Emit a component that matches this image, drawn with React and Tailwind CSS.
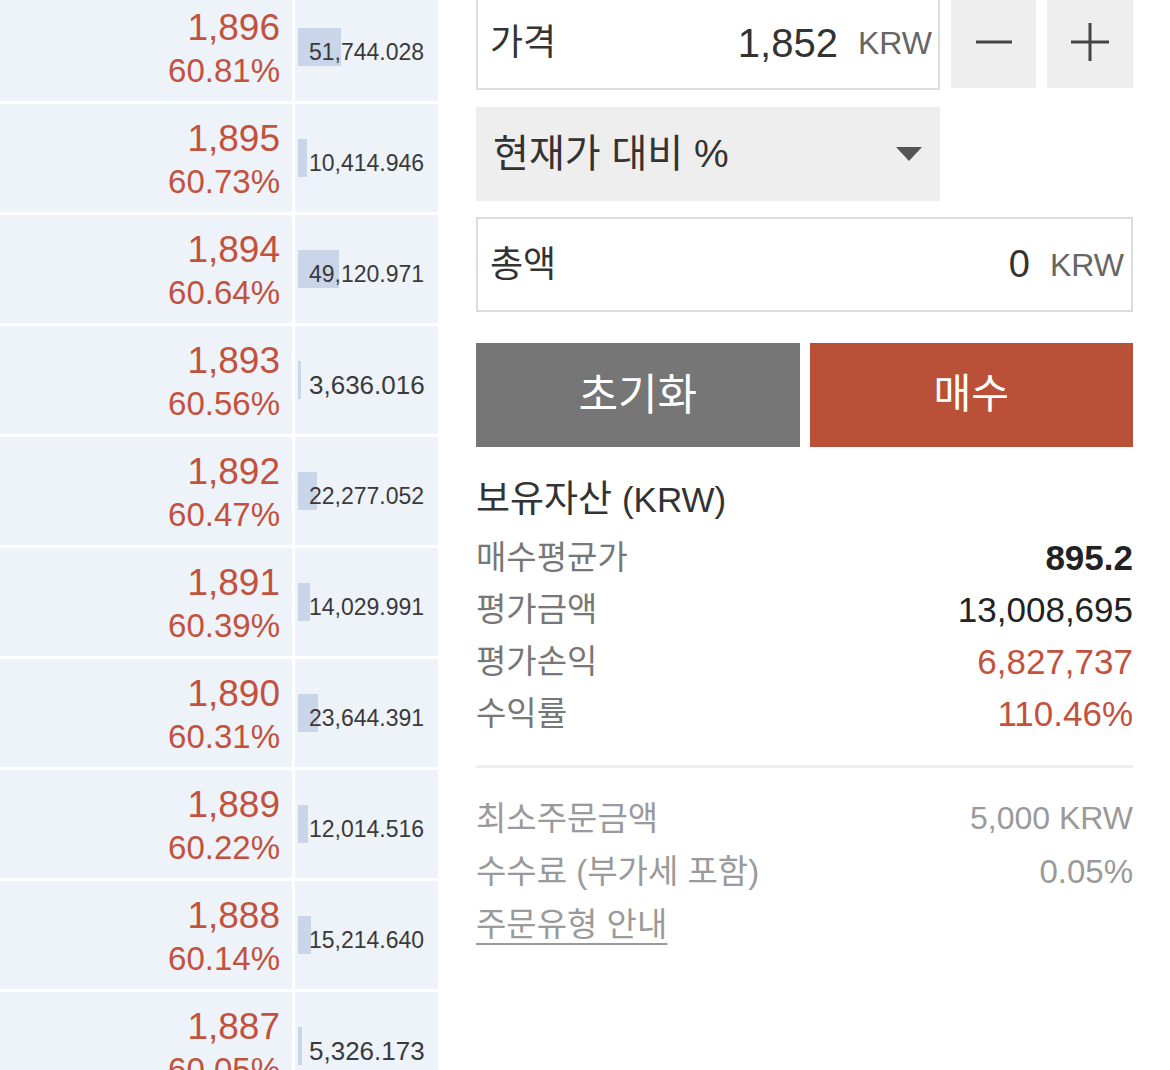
import React from "react";

const rows = [
  { p: "1,896", c: "60.81%", v: "51,744.028", n: 51744 },
  { p: "1,895", c: "60.73%", v: "10,414.946", n: 10414 },
  { p: "1,894", c: "60.64%", v: "49,120.971", n: 49120 },
  { p: "1,893", c: "60.56%", v: "3,636.016", n: 3636 },
  { p: "1,892", c: "60.47%", v: "22,277.052", n: 22277 },
  { p: "1,891", c: "60.39%", v: "14,029.991", n: 14029 },
  { p: "1,890", c: "60.31%", v: "23,644.391", n: 23644 },
  { p: "1,889", c: "60.22%", v: "12,014.516", n: 12014 },
  { p: "1,888", c: "60.14%", v: "15,214.640", n: 15214 },
  { p: "1,887", c: "60.05%", v: "5,326.173", n: 5326 },
];

function BookRow({ r }) {
  const small = r.v.length > 9;
  return (
    <div className="flex h-[108px] shrink-0 gap-[3px]">
      <div className="w-[292px] bg-[#eef2f9] flex flex-col items-end justify-center pr-[12px] pt-[3px] text-[#c2523e]">
        <div className="text-[37px] leading-[43px]">{r.p}</div>
        <div className="text-[33px] leading-[43px]">{r.c}</div>
      </div>
      <div className="relative w-[143px] bg-[#eef2f9] flex items-center pl-[14px] pt-[10px]">
        <div
          className="absolute left-[3px] top-1/2 -translate-y-1/2 h-[38px] bg-[#c9d6ea]"
          style={{ width: Math.max(2, Math.round(r.n / 1200)) }}
        />
        <span
          className={
            "relative text-[#3a3a3a] " +
            (small ? "text-[23px] leading-[30px]" : "text-[26px] leading-[30px]")
          }
        >
          {r.v}
        </span>
      </div>
    </div>
  );
}

export default function App() {
  return (
    <div className="w-[1170px] h-[1070px] overflow-hidden bg-white flex font-['Liberation_Sans','Noto_Sans_CJK_KR',sans-serif]">
      <div className="w-[438px] shrink-0 flex flex-col gap-[3px] -mt-[7px]">
        {rows.map((r) => (
          <BookRow key={r.p} r={r} />
        ))}
      </div>

      <div className="ml-[38px] w-[657px] shrink-0 flex flex-col -mt-[4px]">
        {/* price row */}
        <div className="flex gap-[11px] items-start">
          <div className="w-[464px] h-[94px] border-2 border-[#dcdcdc] flex items-center pl-[12px] pr-[6px]">
            <span className="text-[36px] text-[#333]">가격</span>
            <span className="flex-1 text-right text-[40px] text-[#333]">1,852</span>
            <span className="ml-[20px] text-[32px] text-[#666]">KRW</span>
          </div>
          <div className="w-[85px] h-[92px] bg-[#eeeeee] flex items-center justify-center">
            <svg width="38" height="38" viewBox="0 0 38 38">
              <line x1="1" y1="19" x2="37" y2="19" stroke="#444" strokeWidth="3" />
            </svg>
          </div>
          <div className="w-[86px] h-[92px] bg-[#eeeeee] flex items-center justify-center">
            <svg width="40" height="40" viewBox="0 0 40 40">
              <line x1="1" y1="20" x2="39" y2="20" stroke="#444" strokeWidth="3" />
              <line x1="20" y1="1" x2="20" y2="39" stroke="#444" strokeWidth="3" />
            </svg>
          </div>
        </div>

        {/* dropdown */}
        <div className="mt-[17px] w-[464px] h-[94px] bg-[#eeeeee] flex items-center justify-between pl-[17px] pr-[18px]">
          <span className="text-[39px] text-[#333]">현재가 대비 %</span>
          <svg width="26" height="14" viewBox="0 0 26 14">
            <polygon points="0,0 26,0 13,14" fill="#555" />
          </svg>
        </div>

        {/* total */}
        <div className="mt-[16px] w-full h-[95px] border-2 border-[#dcdcdc] flex items-center pl-[12px] pr-[7px]">
          <span className="text-[36px] text-[#333]">총액</span>
          <span className="flex-1 text-right text-[38px] text-[#333]">0</span>
          <span className="ml-[20px] text-[32px] text-[#666]">KRW</span>
        </div>

        {/* buttons */}
        <div className="mt-[31px] flex gap-[10px] h-[104px]">
          <div className="flex-1 bg-[#767676] flex items-center justify-center text-white text-[43px]">
            초기화
          </div>
          <div className="flex-1 bg-[#bb5038] flex items-center justify-center text-white text-[41px]">
            매수
          </div>
        </div>

        {/* holdings */}
        <div className="mt-[33px] text-[35px] leading-[40px] text-[#333]">
          <span className="text-[37px]">보유자산</span> (KRW)
        </div>
        <div className="mt-[12px] flex flex-col text-[33px] leading-[52px]">
          <div className="flex justify-between">
            <span className="text-[#777]">매수평균가</span>
            <span className="text-[35px] font-bold text-[#222]">895.2</span>
          </div>
          <div className="flex justify-between">
            <span className="text-[#777]">평가금액</span>
            <span className="text-[35px] text-[#222]">13,008,695</span>
          </div>
          <div className="flex justify-between">
            <span className="text-[#777]">평가손익</span>
            <span className="text-[35px] text-[#c2523e]">6,827,737</span>
          </div>
          <div className="flex justify-between">
            <span className="text-[#777]">수익률</span>
            <span className="text-[35px] text-[#c2523e]">110.46%</span>
          </div>
        </div>

        <div className="mt-[25px] h-[3px] bg-[#eeeeee]" />

        <div className="mt-[24px] flex flex-col text-[33px] leading-[53px] text-[#9a9a9a]">
          <div className="flex justify-between">
            <span>최소주문금액</span>
            <span className="text-[32px]">5,000 KRW</span>
          </div>
          <div className="flex justify-between">
            <span>수수료 (부가세 포함)</span>
            <span className="text-[33px]">0.05%</span>
          </div>
          <div>
            <span className="underline underline-offset-[7px] decoration-2">주문유형 안내</span>
          </div>
        </div>
      </div>
    </div>
  );
}
